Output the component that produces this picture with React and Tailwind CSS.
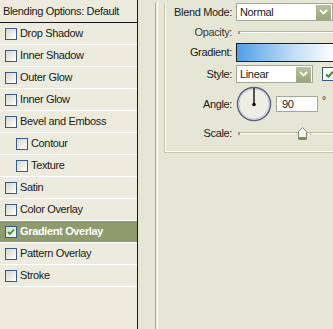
const items = [
  { label: 'Drop Shadow' },
  { label: 'Inner Shadow' },
  { label: 'Outer Glow' },
  { label: 'Inner Glow' },
  { label: 'Bevel and Emboss' },
  { label: 'Contour', indent: true },
  { label: 'Texture', indent: true },
  { label: 'Satin' },
  { label: 'Color Overlay' },
  { label: 'Gradient Overlay', active: true },
  { label: 'Pattern Overlay' },
  { label: 'Stroke' },
]

function Check({ checked }) {
  return (
    <span className="flex h-[12px] w-[12px] shrink-0 items-center justify-center border border-[#3a5a84] bg-gradient-to-br from-[#d6d6cc] to-white">
      {checked && (
        <svg width="8" height="8" viewBox="0 0 8 8">
          <path d="M1 4 L3 6 L7 1.5" fill="none" stroke="#21a121" strokeWidth="1.8" />
        </svg>
      )}
    </span>
  )
}

function DropButton() {
  return (
    <span className="flex h-[15px] w-[15px] items-center justify-center bg-gradient-to-b from-[#b8c29c] to-[#98a57a]">
      <svg width="9" height="6" viewBox="0 0 9 6">
        <path d="M1 1 L4.5 4.5 L8 1" fill="none" stroke="white" strokeWidth="1.8" />
      </svg>
    </span>
  )
}

function Row({ label, children, className }) {
  return (
    <div className={`flex items-center ${className}`}>
      <div className="w-[67px] pr-[1px] text-right">{label}</div>
      <div className="ml-[3px] flex items-center">{children}</div>
    </div>
  )
}

function Track() {
  return (
    <div className="flex w-[96px] items-center">
      <span className="h-[3px] w-[2px] bg-[#9c9c8c]" />
      <span className="h-[2px] flex-1 border-t border-[#b4b4a2] bg-white" />
    </div>
  )
}

export default function App() {
  return (
    <div className="flex h-[329px] w-[333px] overflow-hidden bg-[#e6e6d6] text-[11px] tracking-[-0.35px] text-[#1a1a1a] font-['Liberation_Sans',Arial,sans-serif]">
      <div className="flex h-full w-[138px] shrink-0 flex-col border-r border-[#1a1a1a] bg-[#ecebdd]">
        <div className="flex h-[23px] items-center border-b border-[#1a1a1a] pl-[3px]">
          Blending Options: Default
        </div>
        {items.map((it) => (
          <div
            key={it.label}
            className={`flex h-[22px] items-center gap-[3px] border-b border-white ${it.indent ? 'pl-[16px]' : 'pl-[5px]'} ${it.active ? 'bg-[#8e9c6d] font-bold text-white' : ''}`}
          >
            <Check checked={it.active} />
            <span>{it.label}</span>
          </div>
        ))}
      </div>

      <div className="h-full flex-1 pl-[17px]">
        <div className="h-full border-l border-[#a8a898] pl-[1px]">
          <div className="h-full border-l border-white pl-[6px]">
            <div className="h-[150px] w-[200px] border-b border-l border-[#c4c4b2]">
              <div className="h-full border-b border-l border-white">
                <Row label="Blend Mode:" className="mt-[3px] h-[18px]">
                  <div className="flex h-[18px] w-[97px] items-center justify-between border border-[#a3a898] bg-white pl-[3px] pr-[1px]">
                    <span>Normal</span>
                    <DropButton />
                  </div>
                </Row>
                <Row label="Opacity:" className="mt-[3px] h-[16px] text-[#3a3a3a]">
                  <div className="ml-[2px]">
                    <Track />
                  </div>
                </Row>
                <Row label="Gradient:" className="mt-[3px] h-[19px]">
                  <div className="h-[19px] w-[100px] border border-[#1e1e1e] bg-gradient-to-r from-[#4f9fe4] via-[#c4e0f6] via-60% to-white" />
                </Row>
                <Row label="Style:" className="mt-[3px] h-[18px]">
                  <div className="flex h-[18px] w-[77px] items-center justify-between border border-[#a3a898] bg-white pl-[3px] pr-[1px]">
                    <span>Linear</span>
                    <DropButton />
                  </div>
                  <span className="ml-[9px] flex h-[14px] w-[14px] items-center justify-center border border-[#3a5a84] bg-white">
                    <svg width="9" height="9" viewBox="0 0 8 8">
                      <path d="M1 4 L3 6 L7 1.5" fill="none" stroke="#21a121" strokeWidth="1.8" />
                    </svg>
                  </span>
                </Row>
                <Row label="Angle:" className="mt-[3px] h-[36px]">
                  <svg width="37" height="36" viewBox="0 0 37 36">
                    <circle cx="18" cy="18" r="16.5" fill="#eeeee6" stroke="#5a6080" strokeWidth="1.5" />
                    <circle cx="18" cy="18" r="15" fill="none" stroke="#c8cad8" strokeWidth="1" />
                    <line x1="18" y1="18.5" x2="18" y2="2" stroke="#111" strokeWidth="1.4" />
                    <circle cx="18" cy="18.5" r="1.8" fill="#111" />
                  </svg>
                  <div className="ml-[3px] flex h-[16px] w-[42px] items-center border border-[#a3a898] bg-white pl-[5px]">
                    90
                  </div>
                  <span className="ml-[4px] -mt-[8px] text-[10px]">°</span>
                </Row>
                <Row label="Scale:" className="mt-[3px] h-[16px]">
                  <div className="relative ml-[2px] flex h-[16px] items-center">
                    <Track />
                    <svg className="absolute left-[60px] top-[2px]" width="9" height="13" viewBox="0 0 9 13">
                      <path d="M0.5 4.5 L4.5 0.5 L8.5 4.5 L8.5 12.5 L0.5 12.5 Z" fill="#f6f6f0" stroke="#8a8a78" />
                      <rect x="1" y="10" width="7" height="2.5" fill="#6f9a3c" />
                    </svg>
                  </div>
                </Row>
              </div>
            </div>
          </div>
        </div>
      </div>
    </div>
  )
}
